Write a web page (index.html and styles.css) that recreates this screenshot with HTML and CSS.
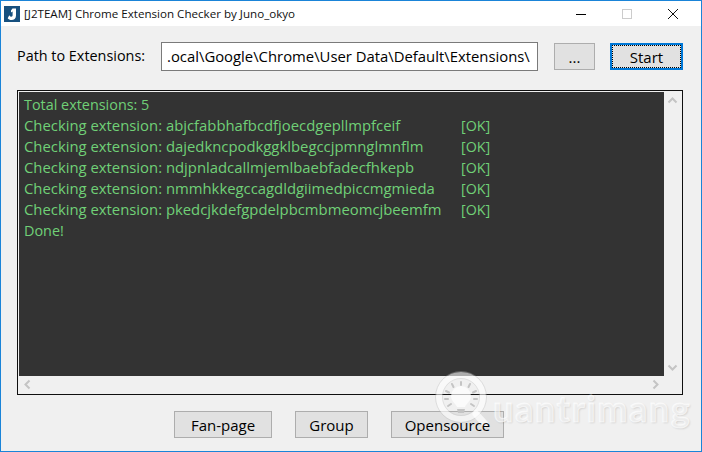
FILE: index.html
```
<!DOCTYPE html>
<html lang="en">
<head>
<meta charset="utf-8">
<title>[J2TEAM] Chrome Extension Checker by Juno_okyo</title>
<link rel="stylesheet" href="styles.css">
</head>
<body>
<div class="window">
  <header class="titlebar">
    <svg class="app-icon" width="16" height="16" viewBox="0 0 16 16"><rect width="16" height="16" fill="#17507f"/><path d="M8.500 2.500h3.500v7c0 3-2 4.500-4.500 4.500-1.700 0-3-.7-3.800-1.800l1.600-3c.5.900 1.200 1.500 2 1.500.9 0 1.300-.6 1.300-1.600V5.500l-1.600 1V4.500z" fill="#fff"/></svg>
    <span class="title">[J2TEAM] Chrome Extension Checker by Juno_okyo</span>
    <div class="controls">
      <svg class="ctl" width="46" height="26" viewBox="0 0 46 26"><path d="M18 13.500h10" stroke="#000" stroke-width="1"/></svg>
      <svg class="ctl" width="46" height="26" viewBox="0 0 46 26"><rect x="18.500" y="8.500" width="9" height="9" fill="none" stroke="#ccc"/></svg>
      <svg class="ctl" width="46" height="26" viewBox="0 0 46 26"><path d="M18 8l10 10M28 8L18 18" stroke="#111" stroke-width="1" fill="none"/></svg>
    </div>
  </header>
  <main class="content">
    <div class="toolbar">
      <label class="path-label">Path to Extensions:</label>
      <div class="path-input">.ocal\Google\Chrome\User Data\Default\Extensions\</div>
      <button class="btn btn-browse">...</button>
      <button class="btn btn-start"><span class="focus">Start</span></button>
    </div>
    <div class="log">
      <div class="log-top">
        <div class="log-text">
          <div class="plain">Total extensions: 5</div>
          <div class="row"><span class="name">Checking extension: abjcfabbhafbcdfjoecdgepllmpfceif</span><span class="ok">[OK]</span></div>
          <div class="row"><span class="name">Checking extension: dajedkncpodkggklbegccjpmnglmnflm</span><span class="ok">[OK]</span></div>
          <div class="row"><span class="name">Checking extension: ndjpnladcallmjemlbaebfadecfhkepb</span><span class="ok">[OK]</span></div>
          <div class="row"><span class="name">Checking extension: nmmhkkegccagdldgiimedpiccmgmieda</span><span class="ok">[OK]</span></div>
          <div class="row"><span class="name">Checking extension: pkedcjkdefgpdelpbcmbmeomcjbeemfm</span><span class="ok">[OK]</span></div>
          <div class="plain">Done!</div>
        </div>
        <div class="vscroll">
          <svg width="17" height="17" viewBox="0 0 17 17"><path d="M4.500 10.500l4-4 4 4" fill="none" stroke="#c4c4c4" stroke-width="2"/></svg>
          <svg width="17" height="17" viewBox="0 0 17 17"><path d="M4.500 6.500l4 4 4-4" fill="none" stroke="#c4c4c4" stroke-width="2"/></svg>
        </div>
      </div>
      <div class="hscroll">
        <svg width="17" height="17" viewBox="0 0 17 17"><path d="M10.500 4.500l-4 4 4 4" fill="none" stroke="#c4c4c4" stroke-width="2"/></svg>
        <svg width="17" height="17" viewBox="0 0 17 17"><path d="M6.500 4.500l4 4-4 4" fill="none" stroke="#c4c4c4" stroke-width="2"/></svg>
      </div>
    </div>
    <div class="actions">
      <button class="btn btn-fan">Fan-page</button>
      <button class="btn btn-group">Group</button>
      <button class="btn btn-open"><span class="over">Opensource</span></button>
    </div>
  </main>
  <div class="watermark">
    <svg class="wm-icon" width="60" height="60" viewBox="0 0 60 60">
      <circle cx="27" cy="27" r="22" fill="none" stroke="#fff" stroke-opacity=".6" stroke-width="6"/>
      <circle cx="27" cy="27" r="25.500" fill="none" stroke="#b8b8b8" stroke-opacity=".35"/>
      <circle cx="27" cy="27" r="18.500" fill="none" stroke="#b8b8b8" stroke-opacity=".3"/>
      <path d="M42 44l9 10" stroke="#fff" stroke-opacity=".7" stroke-width="7" stroke-linecap="round"/>
      <path d="M23 37c-1-3-6-6-6-11a10 10 0 0 1 20 0c0 5-5 8-6 11z" fill="#fff" fill-opacity=".7"/>
      <path d="M23 39h8l-1 4h-6z" fill="#c4c4c4"/>
      <path d="M27 12v3M18 14l1.500 3M36 14l-1.500 3M12 21l3 1.500M42 21l-3 1.500M11 29h3M40 29h3M14 36l3-2M40 36l-3-2" stroke="#c4c4c4" stroke-width="2" stroke-linecap="round"/>
    </svg>
    <span class="wm-text">uantrimang</span>
  </div>
</div>
</body>
</html>
```
FILE: styles.css
```
* { box-sizing: border-box; }
html, body { margin: 0; padding: 0; }
body { width: 702px; height: 452px; overflow: hidden; font-family: "Open Sans", "Noto Sans", sans-serif; color: #000; }
.window { position: relative; width: 702px; height: 452px; border: 1px solid #1a84d8; background: #f0f0f0; display: flex; flex-direction: column; overflow: hidden; }
.titlebar { height: 25px; background: #fff; display: flex; align-items: center; padding-left: 3px; flex: none; }
.app-icon { flex: none; }
.title { margin-left: 4px; font-size: 11.600px; color: #111; white-space: nowrap; }
.controls { margin-left: auto; display: flex; padding-right: 5px; }
.ctl { display: block; }
.content { flex: 1; display: flex; flex-direction: column; padding: 16px 18px 0 16px; }
.toolbar { display: flex; align-items: center; height: 29px; }
.path-label { width: 144px; font-size: 14.400px; white-space: nowrap; position: relative; top: -1px; }
.path-input { width: 377px; height: 29px; border: 1px solid #7a7a7a; background: #fff; font-size: 14.850px; line-height: 27px; padding-left: 5px; white-space: nowrap; overflow: hidden; }
.btn { font-family: inherit; font-size: 15px; background: #e1e1e1; border: 1px solid #adadad; color: #000; height: 27px; padding: 0; display: flex; align-items: center; justify-content: center; }
.btn-browse { width: 41px; margin-left: 16px; }
.btn-start { width: 73px; margin-left: 15px; border: 2px solid #0078d7; }
.focus { width: 100%; height: 100%; border: 1px dotted #000; display: flex; align-items: center; justify-content: center; }
.log { margin-top: 19px; height: 305px; width: 666px; border: 1px solid #101010; padding: 1px; background: #f0f0f0; display: flex; flex-direction: column; }
.log-top { flex: 1; display: flex; min-height: 0; }
.log-text { flex: 1; background: #333; color: #70d077; font-size: 14.850px; line-height: 21px; padding: 2px 0 0 5px; white-space: nowrap; }
.plain { font-size: 14.400px; }
.row { display: flex; }
.name { width: 437px; }
.ok { font-size: 14.300px; }
.vscroll { width: 17px; display: flex; flex-direction: column; justify-content: space-between; flex: none; }
.hscroll { height: 17px; display: flex; justify-content: space-between; padding-right: 17px; flex: none; }
.vscroll svg, .hscroll svg { display: block; }
.actions { display: flex; margin-top: 16px; padding-left: 157px; }
.btn-fan { width: 98px; }
.btn-group { width: 73px; margin-left: 23px; }
.btn-open { width: 113px; margin-left: 23px; }
.over { position: relative; z-index: 2; }
.watermark { position: absolute; z-index: 1; left: 433px; top: 369px; width: 262px; height: 66px; display: flex; align-items: flex-start; pointer-events: none; }
.wm-icon { flex: none; display: block; }
.wm-text { font-family: "Lato", sans-serif; font-weight: 700; font-size: 36px; line-height: 40px; letter-spacing: 1.600px; margin-left: -1px; margin-top: 18px; color: rgba(255,255,255,.6); -webkit-text-stroke: 1px rgba(255,255,255,.6); text-shadow: 1px 1px 2px rgba(0,0,0,.14); white-space: nowrap; }
```
